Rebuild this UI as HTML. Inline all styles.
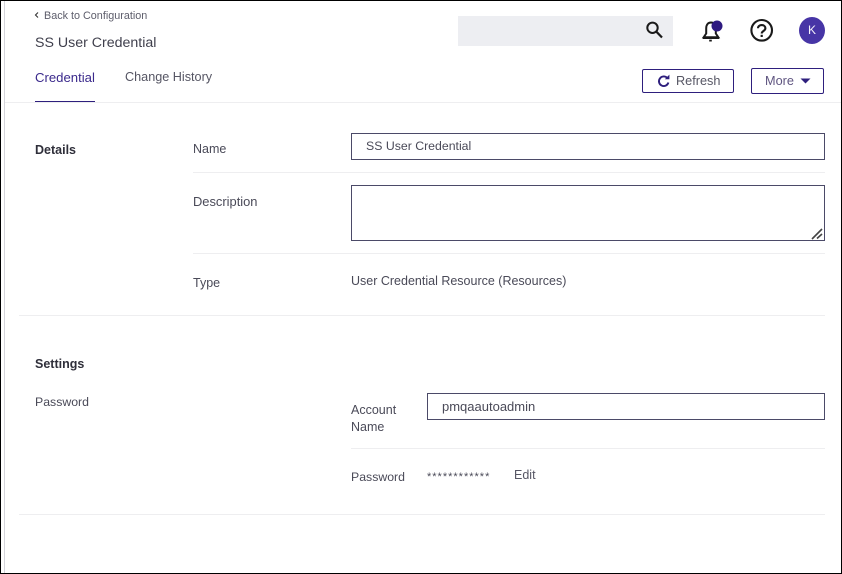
<!DOCTYPE html>
<html><head><meta charset="utf-8">
<style>
html,body{margin:0;padding:0;background:#fff}
#p{position:relative;width:842px;height:574px;overflow:hidden;background:#fff;font-family:"Liberation Sans",sans-serif;color:#4b4b5c}
.t{position:absolute;white-space:nowrap;font-size:12.5px;line-height:16px}
.l{position:absolute;background:#eeeef0;height:1px}
.b{position:absolute;box-sizing:border-box;border:1.4px solid #4b4a68;background:#fff}
.btn{position:absolute;box-sizing:border-box;border:1px solid #2e1f7d;border-radius:2px;background:#fff}
svg{position:absolute;overflow:visible}
</style></head><body>
<div id="p">
<div style="position:absolute;left:0;top:0;width:842px;height:574px;box-sizing:border-box;border:1px solid #000"></div>
<div style="position:absolute;left:4px;top:1px;width:1px;height:572px;background:#d4d4da"></div>

<svg style="left:34px;top:11px" width="6" height="8" viewBox="0 0 6 8"><path d="M4 1.5 1.5 4 4 6.5" fill="none" stroke="#333" stroke-width="1.1"/></svg>
<div class="t" style="left:44px;top:8px;font-size:10.8px;color:#5d5d6b">Back to Configuration</div>
<div class="t" style="left:35px;top:35px;font-size:14.2px;color:#3f3f4c">SS User Credential</div>
<div class="t" style="left:35px;top:70px;font-size:13.15px;color:#3b2a8c">Credential</div>
<div class="t" style="left:125px;top:69px;font-size:12.65px;color:#565664">Change History</div>
<div class="l" style="left:5px;top:102px;width:836px"></div>
<div style="position:absolute;left:35px;top:101px;width:60px;height:1.4px;background:#2e1f7d"></div>

<div style="position:absolute;left:458px;top:16px;width:215px;height:30px;background:#edeef2"></div>
<svg style="left:644px;top:20px" width="20" height="20" viewBox="0 0 20 20"><circle cx="8.5" cy="7.8" r="5.2" fill="none" stroke="#1a1a1a" stroke-width="2"/><path d="M12.4 11.7l5.6 5.8" stroke="#1a1a1a" stroke-width="2.2" fill="none"/></svg>

<svg style="left:700px;top:18px" width="26" height="26" viewBox="0 0 26 26"><path d="M11 4.5C7.8 4.5 6.2 7 6.2 10.5V15.5L3.7 19.2H18.3L15.8 15.5V10.5C15.8 7 14.2 4.5 11 4.5Z" fill="none" stroke="#1a1a1a" stroke-width="2"/><path d="M2.8 20.2H19.2" stroke="#1a1a1a" stroke-width="1.6" fill="none"/><path d="M9.2 22.6h2.6" stroke="#1a1a1a" stroke-width="1.8" fill="none"/><circle cx="17" cy="8" r="5.5" fill="#2e1a80"/></svg>

<svg style="left:749px;top:18px" width="26" height="26" viewBox="0 0 26 26"><circle cx="12.7" cy="12.3" r="10.3" fill="none" stroke="#1a1a1a" stroke-width="2.1"/><path d="M9 10.3C9 8.2 10.7 7.1 12.7 7.1s3.7 1.2 3.7 3.1c0 2.8-3.7 2.7-3.7 5.3" fill="none" stroke="#1a1a1a" stroke-width="2.1"/><rect x="11.6" y="16.8" width="2.2" height="2.2" fill="#1a1a1a"/></svg>

<div style="position:absolute;left:799px;top:17px;width:26px;height:27px;border-radius:50%;background:#4735a6;color:#f4f2fb;font-size:12px;line-height:26px;text-align:center">K</div>

<div class="btn" style="left:642px;top:69px;width:92px;height:24px"></div>
<svg style="left:657px;top:73px" width="16" height="16" viewBox="0 0 16 16"><path d="M10.3 5A4.8 4.8 0 1 0 11.4 9.5" fill="none" stroke="#2e1f7d" stroke-width="1.9"/><path d="M7.8 6.2H12.4V1.6Z" fill="#2e1f7d"/></svg>
<div class="t" style="left:676px;top:73px;font-size:12.7px;color:#565664">Refresh</div>
<div class="btn" style="left:751px;top:68px;width:73px;height:26px"></div>
<div class="t" style="left:765px;top:73px;font-size:12.7px;color:#5f5580">More</div>
<svg style="left:800px;top:78px" width="11" height="6" viewBox="0 0 11 6"><path d="M.5.5h10L5.5 5.5Z" fill="#2e1f7d"/></svg>

<div class="t" style="left:35px;top:142px;font-weight:bold;color:#2f2f3a">Details</div>
<div class="t" style="left:193px;top:141px;color:#4a4a58">Name</div>
<div class="b" style="left:351px;top:133px;width:474px;height:27px"></div>
<div class="t" style="left:366px;top:138px;font-size:12.3px;color:#4a4a58">SS User Credential</div>
<div class="l" style="left:193px;top:172px;width:632px"></div>
<div class="t" style="left:193px;top:194px;font-size:12.9px;color:#4a4a58">Description</div>
<div class="b" style="left:351px;top:185px;width:474px;height:56px"></div>
<svg style="left:811px;top:228px" width="12" height="12" viewBox="0 0 12 12"><path d="M1 11 11 1M6 10.5l5-4.5" stroke="#444" stroke-width="1.6" fill="none"/></svg>
<div class="l" style="left:193px;top:253px;width:632px"></div>
<div class="t" style="left:193px;top:275px;color:#4a4a58">Type</div>
<div class="t" style="left:351px;top:273px;color:#4a4a58">User Credential Resource (Resources)</div>
<div class="l" style="left:19px;top:315px;width:806px"></div>

<div class="t" style="left:35px;top:356px;font-weight:bold;color:#2f2f3a">Settings</div>
<div class="t" style="left:35px;top:394px;font-size:12.3px;color:#4a4a58">Password</div>
<div class="t" style="left:351px;top:402px;color:#4a4a58">Account</div>
<div class="t" style="left:351px;top:419px;color:#4a4a58">Name</div>
<div class="b" style="left:427px;top:393px;width:398px;height:27px"></div>
<div class="t" style="left:442px;top:399px;font-size:13px;color:#4a4a58">pmqaautoadmin</div>
<div class="l" style="left:351px;top:448px;width:474px"></div>
<div class="t" style="left:351px;top:469px;font-size:12.3px;color:#4a4a58">Password</div>
<div class="t" style="left:427px;top:469px;font-size:11px;color:#4a4a58;letter-spacing:1px">************</div>
<div class="t" style="left:514px;top:467px;color:#565664">Edit</div>
<div class="l" style="left:19px;top:514px;width:806px"></div>
</div>
</body></html>
